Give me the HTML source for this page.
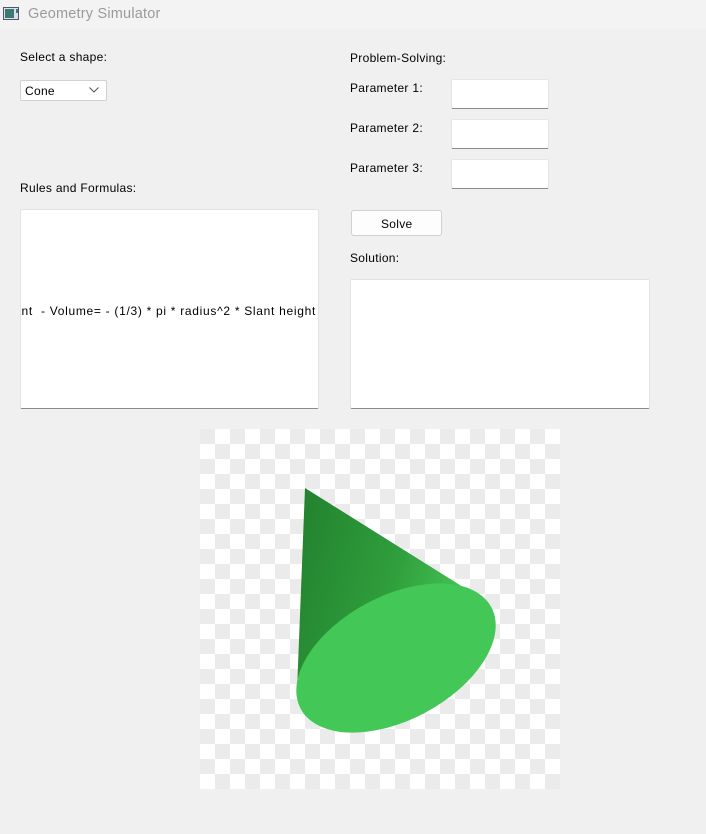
<!DOCTYPE html>
<html><head><meta charset="utf-8"><style>
*{margin:0;padding:0;box-sizing:border-box}
body{width:706px;height:834px;background:#f0f0f0;font-family:"Liberation Sans",sans-serif;font-size:12px;color:#000;position:relative;overflow:hidden;letter-spacing:0.3px}
.t{position:absolute;white-space:nowrap}
.title{position:absolute;left:0;top:0;width:706px;height:30px;background:#f3f3f3}
.inp{position:absolute;background:#fff;border:1px solid #e5e5e5;border-bottom:1px solid #8a8a8a;border-radius:2px}
.box{position:absolute;background:#fff;border:1px solid #e3e3e3;border-bottom:1px solid #8a8a8a;border-radius:2px;overflow:hidden}
</style></head><body>
<div class="title"></div>
<svg style="position:absolute;left:3px;top:7px" width="18" height="14"><rect x="0.5" y="0.5" width="15" height="12" fill="#dde" stroke="#556"/><rect x="2" y="2" width="9" height="9" fill="#3a7a70"/><rect x="13" y="2" width="2" height="4" fill="#3a7a70"/></svg>
<div class="t" style="left:28px;top:6px;font-size:14.5px;color:#9a9a9a;letter-spacing:0.2px">Geometry Simulator</div>

<div class="t" style="left:20px;top:50px">Select a shape:</div>
<div class="inp" style="left:20px;top:80px;width:87px;height:21px;border:1px solid #d0d0d0"></div>
<div class="t" style="left:25px;top:84px">Cone</div>
<svg style="position:absolute;left:89px;top:87px" width="10" height="6"><path d="M0.5 0.5 L5 5 L9.5 0.5" fill="none" stroke="#555" stroke-width="1"/></svg>

<div class="t" style="left:20px;top:181px">Rules and Formulas:</div>
<div class="box" style="left:20px;top:209px;width:299px;height:200px"><div class="t" style="right:2px;top:94px;letter-spacing:0.7px">nt&nbsp; - Volume= - (1/3) * pi * radius^2 * Slant height</div></div>

<div class="t" style="left:350px;top:51px">Problem-Solving:</div>
<div class="t" style="left:350px;top:81px">Parameter 1:</div>
<div class="t" style="left:350px;top:121px">Parameter 2:</div>
<div class="t" style="left:350px;top:161px">Parameter 3:</div>
<div class="inp" style="left:451px;top:79px;width:98px;height:30px"></div>
<div class="inp" style="left:451px;top:119px;width:98px;height:30px"></div>
<div class="inp" style="left:451px;top:159px;width:98px;height:30px"></div>
<div style="position:absolute;left:351px;top:210px;width:91px;height:26px;background:#fdfdfd;border:1px solid #d0d0d0;border-radius:3px"></div>
<div class="t" style="left:381px;top:217px">Solve</div>
<div class="t" style="left:350px;top:251px">Solution:</div>
<div class="box" style="left:350px;top:279px;width:300px;height:130px"></div>

<div style="position:absolute;left:200px;top:429px;width:360px;height:360px;background-color:#fff;background-image:conic-gradient(#fff 0 25%,#ebebeb 0 50%,#fff 0 75%,#ebebeb 0);background-size:30px 30px"></div>
<svg style="position:absolute;left:200px;top:429px" width="360" height="360">
<defs><linearGradient id="g" x1="0" y1="0" x2="1" y2="0.3"><stop offset="0" stop-color="#22802e"/><stop offset="0.6" stop-color="#2f9e3c"/><stop offset="1" stop-color="#46c455"/></linearGradient></defs>
<path d="M105 59 L97 262 L279 168 Z" fill="url(#g)"/>
<ellipse cx="196" cy="229" rx="108" ry="62" transform="rotate(-28 196 229)" fill="#43c757"/>
</svg>
</body></html>
